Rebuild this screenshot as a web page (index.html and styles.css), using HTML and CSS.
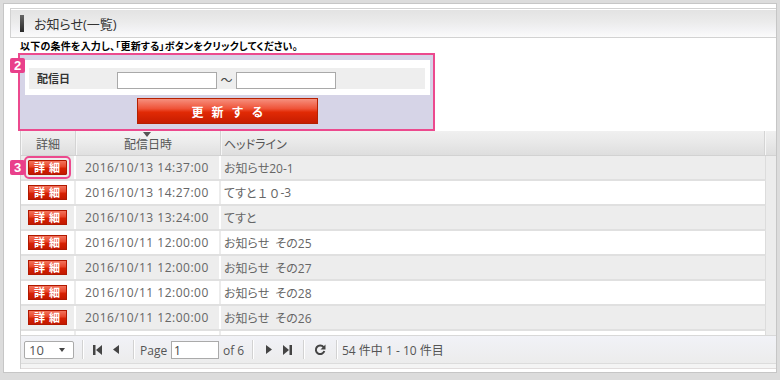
FILE: index.html
```html
<!DOCTYPE html>
<html lang="ja">
<head>
<meta charset="UTF-8">
<meta name="viewport" content="width=device-width, initial-scale=1.0">
<title>お知らせ(一覧)</title>
<link rel="stylesheet" href="styles.css">
</head>
<body>

<div class="panel">
    <div class="title-bar">
        <span class="title-mark"></span>
        <h1 class="title">お知らせ(一覧)</h1>
    </div>

    <p class="guide">以下の条件を入力し、「更新する」ボタンをクリックしてください。</p>

    <div class="search">
        <span class="badge badge-search">2</span>
        <div class="search-form">
            <div class="search-row">
                <label class="search-label" for="dateFrom">配信日</label>
                <input class="search-input" type="text" id="dateFrom">
                <span class="tilde">～</span>
                <input class="search-input" type="text" id="dateTo">
            </div>
        </div>
        <div class="search-actions">
            <button class="btn-update" type="button">更新する</button>
        </div>
    </div>

    <div class="grid">
        <span class="badge badge-detail">3</span>
        <div class="grid-head">
            <div class="hcell col-detail">詳細</div>
            <div class="hcell col-date sorted">配信日時</div>
            <div class="hcell col-headline">ヘッドライン</div>
            <div class="hcell col-gutter"></div>
        </div>
        <div class="grid-body" id="gridBody">
        </div>
        <div class="pager">
            <div class="page-size">10<span class="caret"></span></div>
            <span class="sep sep-1"></span>
            <svg class="pg-first" width="10" height="10" viewBox="0 0 10 10"><rect x="0" y="0" width="2.5" height="10"/><path d="M9 0L3 5L9 10Z"/></svg>
            <svg class="pg-prev" width="6" height="9" viewBox="0 0 6 9"><path d="M6 0L0 4.5L6 9Z"/></svg>
            <span class="sep sep-2"></span>
            <span class="page-label">Page</span>
            <input class="page-input" type="text" value="1">
            <span class="page-of">of 6</span>
            <span class="sep sep-3"></span>
            <svg class="pg-next" width="6" height="9" viewBox="0 0 6 9"><path d="M0 0L6 4.5L0 9Z"/></svg>
            <svg class="pg-last" width="10" height="10" viewBox="0 0 10 10"><path d="M1 0L7 5L1 10Z"/><rect x="7.5" y="0" width="2.5" height="10"/></svg>
            <span class="sep sep-4"></span>
            <svg class="pg-refresh" width="12" height="12" viewBox="0 0 12 12"><path d="M9.6 3.2A4.3 4.3 0 1 0 10.3 7" fill="none" stroke="#444" stroke-width="2"/><path d="M11.5 0.5V5.5H6.5Z"/></svg>
            <span class="sep sep-5"></span>
            <span class="page-info">54 件中 1 - 10 件目</span>
        </div>
        <div class="grid-foot"></div>
    </div>
</div>

<script>
    const rows = [
        ["2016/10/13 14:37:00", "お知らせ20-1"],
        ["2016/10/13 14:27:00", "てすと<span class=\"wide\">１０</span>-3"],
        ["2016/10/13 13:24:00", "てすと"],
        ["2016/10/11 12:00:00", "お知らせ  その25"],
        ["2016/10/11 12:00:00", "お知らせ  その27"],
        ["2016/10/11 12:00:00", "お知らせ  その28"],
        ["2016/10/11 12:00:00", "お知らせ  その26"],
        ["2016/10/11 12:00:00", "お知らせ  その24"]
    ];

    const gridBody = document.getElementById("gridBody");

    rows.forEach(function(row, i) {
        const div = document.createElement("div");
        div.className = i % 2 === 0 ? "grid-row" : "grid-row even";
        div.innerHTML = `
            <div class="cell col-detail"><button class="btn-detail${i === 0 ? " focused" : ""}" type="button">詳細</button></div>
            <div class="cell col-date">${row[0]}</div>
            <div class="cell col-headline">${row[1]}</div>
        `;
        gridBody.appendChild(div);
    });
</script>

</body>
</html>
```

FILE: styles.css
```css
body {
    margin: 0;
    background-color: #dcdcdc;
    font-family: "Open Sans", "Noto Sans CJK JP", sans-serif;
    font-feature-settings: "palt";
    color: #555;
}
.panel {
    margin: 3px 0 0 3px;
    width: 774px;
    height: 370px;
    box-sizing: border-box;
    padding-top: 4px;
    background-color: #fff;
    border: 1px solid #c6c6c6;
}

/* title */
.title-bar {
    margin-left: 6px;
    height: 30px;
    box-sizing: border-box;
    display: flex;
    align-items: center;
    padding-left: 9px;
    border: 1px solid #d2d2d2;
    border-right: none;
    background: linear-gradient(#e2e2e2, #ebebeb 45%, #f3f3f5 75%, #fbfbfb);
    box-shadow: inset 0 1px 0 #fff;
}
.title-mark {
    width: 4px;
    height: 17px;
    background: linear-gradient(#666, #2a2a2a);
}
.title {
    margin: 0 0 0 10px;
    font-size: 13px;
    font-weight: normal;
    color: #333;
}
.guide {
    margin: 0;
    padding-left: 16px;
    height: 15px;
    line-height: 17px;
    font-size: 10px;
    font-weight: bold;
    letter-spacing: 0.2px;
    color: #000;
}

/* search */
.search {
    position: relative;
    margin-left: 14px;
    width: 417px;
    box-sizing: border-box;
    padding: 5px 3px 5px 5px;
    border: 2px solid #ec4a8e;
    background-color: #d6d4e7;
}
.search-form {
    background-color: #fff;
    padding: 8px 5px 6px 4px;
}
.search-row {
    height: 21px;
    display: flex;
    align-items: flex-end;
    background-color: #eee;
}
.search-label {
    width: 88px;
    flex-shrink: 0;
    box-sizing: border-box;
    padding-left: 8px;
    line-height: 21px;
    font-size: 11px;
    font-weight: bold;
    color: #333;
}
.search-input {
    width: 100px;
    height: 17px;
    box-sizing: border-box;
    margin: 0;
    border: 1px solid #a9a9a9;
    background-color: #fff;
}
.tilde {
    width: 19px;
    text-align: center;
    font-size: 12px;
    line-height: 17px;
    color: #444;
}
.search-actions {
    margin-top: 3px;
    display: flex;
    justify-content: center;
}
.btn-update {
    width: 181px;
    height: 26px;
    padding: 0 0 0 8px;
    border: 1px solid #b42000;
    background: linear-gradient(#f6907e, #ef5338 40%, #e12a05 55%, #c61c00);
    color: #fff;
    font-family: "Noto Sans CJK JP", sans-serif;
    font-size: 12px;
    font-weight: bold;
    letter-spacing: 8px;
    cursor: pointer;
}

/* badges */
.badge {
    position: absolute;
    width: 15px;
    height: 15px;
    border-radius: 2px;
    background-color: #e9408b;
    color: #fff;
    font-family: "Liberation Sans", sans-serif;
    font-size: 13px;
    font-weight: bold;
    line-height: 15px;
    text-align: center;
    z-index: 2;
}
.badge-search {
    left: -10px;
    top: 3px;
}
.badge-detail {
    left: -11px;
    top: 29px;
}

/* grid */
.grid {
    position: relative;
    margin-left: 16px;
    border-left: 1px solid #d0d0d0;
}
.grid-head {
    display: flex;
    height: 25px;
    box-sizing: border-box;
    border-bottom: 1px solid #d2d2d2;
    background: linear-gradient(#f0f0f0, #e9e9e9 45%, #dedede);
}
.hcell {
    position: relative;
    box-sizing: border-box;
    display: flex;
    align-items: center;
    justify-content: center;
    padding-top: 2px;
    font-size: 12px;
    color: #555;
    border-right: 1px solid #d4d4d4;
    box-shadow: inset 1px 0 0 #f6f6f6;
}
.hcell.col-headline {
    justify-content: flex-start;
    padding-left: 3px;
}
.hcell.sorted {
    background: linear-gradient(#f4f4f4, #ececec 45%, #e0e0e0);
}
.hcell.sorted::before {
    content: "";
    position: absolute;
    top: 1px;
    left: 67px;
    border-left: 4px solid transparent;
    border-right: 4px solid transparent;
    border-top: 5px solid #555;
}
.col-detail {
    width: 55px;
}
.col-date {
    width: 145px;
}
.col-headline {
    width: 544px;
}
.col-gutter {
    width: 10px;
    border-right: none;
}
.grid-body {
    height: 179px;
    overflow: hidden;
    padding-right: 10px;
    background-color: #ececec;
}
.grid-row {
    display: flex;
    height: 25px;
    box-sizing: border-box;
    border-bottom: 2px solid #e0e0e0;
    border-right: 1px solid #dcdcdc;
    background-color: #ededed;
}
.grid-row.even {
    background-color: #fff;
}
.cell {
    box-sizing: border-box;
    display: flex;
    align-items: center;
    font-size: 12px;
    color: #666;
    border-right: 2px solid #fff;
}
.grid-row.even .cell {
    border-right-color: #ececec;
}
.cell.col-detail {
    justify-content: center;
    padding-right: 1px;
}
.cell.col-date {
    padding-left: 9px;
    letter-spacing: 0.5px;
}
.cell.col-headline {
    padding-left: 3px;
    border-right: none;
    white-space: pre;
}
.wide {
    font-feature-settings: normal;
}
.btn-detail {
    width: 39px;
    height: 15px;
    padding: 0 0 0 4px;
    border: 1px solid #b01800;
    background: linear-gradient(#f2735c, #e8452a 45%, #d82204 55%, #c21800);
    color: #fff;
    font-family: "Noto Sans CJK JP", sans-serif;
    font-size: 11px;
    font-weight: bold;
    line-height: 13px;
    letter-spacing: 4px;
    cursor: pointer;
}
.btn-detail.focused {
    outline: 2px solid #ec4a8e;
    outline-offset: 2px;
    border-radius: 1px;
}

/* pager */
.pager {
    display: flex;
    align-items: center;
    height: 28px;
    box-sizing: border-box;
    border-top: 1px solid #d8d8d8;
    background: linear-gradient(#f1f2f7, #ececec);
    font-size: 12px;
    line-height: 18px;
    color: #555;
    fill: #444;
}
.page-size {
    position: relative;
    margin-left: 3px;
    width: 50px;
    height: 18px;
    box-sizing: border-box;
    padding-left: 4px;
    border: 1px solid #aaa;
    border-radius: 2px;
    background-color: #fff;
    font-size: 13px;
    line-height: 16px;
}
.caret {
    position: absolute;
    right: 8px;
    top: 6px;
    border-left: 3px solid transparent;
    border-right: 3px solid transparent;
    border-top: 4px solid #444;
}
.sep {
    width: 1px;
    height: 19px;
    background-color: #d2d2d2;
    border-right: 1px solid #fff;
}
.sep-1 { margin-left: 8px; }
.pg-first { margin-left: 9px; }
.pg-prev { margin-left: 10px; }
.sep-2 { margin-left: 14px; }
.page-label {
    margin-left: 5px;
    width: 31px;
    padding-top: 3px;
}
.page-input {
    width: 48px;
    height: 18px;
    box-sizing: border-box;
    margin: 1px 0 0;
    padding: 0 2px;
    border: 1px solid #aaa;
    font-family: "Open Sans", sans-serif;
    font-size: 12px;
    color: #444;
}
.page-of {
    margin-left: 4px;
    width: 25px;
    padding-top: 3px;
}
.sep-3 { margin-left: 4px; }
.pg-next { margin-left: 12px; }
.pg-last { margin-left: 10px; }
.sep-4 { margin-left: 11px; }
.pg-refresh { margin-left: 9px; }
.sep-5 { margin-left: 10px; }
.page-info {
    margin-left: 4px;
    padding-top: 2px;
}
.grid-foot {
    height: 6px;
    box-sizing: border-box;
    border-top: 1px solid #dcdcdc;
    border-bottom: 1px solid #e0dcdc;
    background-color: #f4f4f4;
}
```
